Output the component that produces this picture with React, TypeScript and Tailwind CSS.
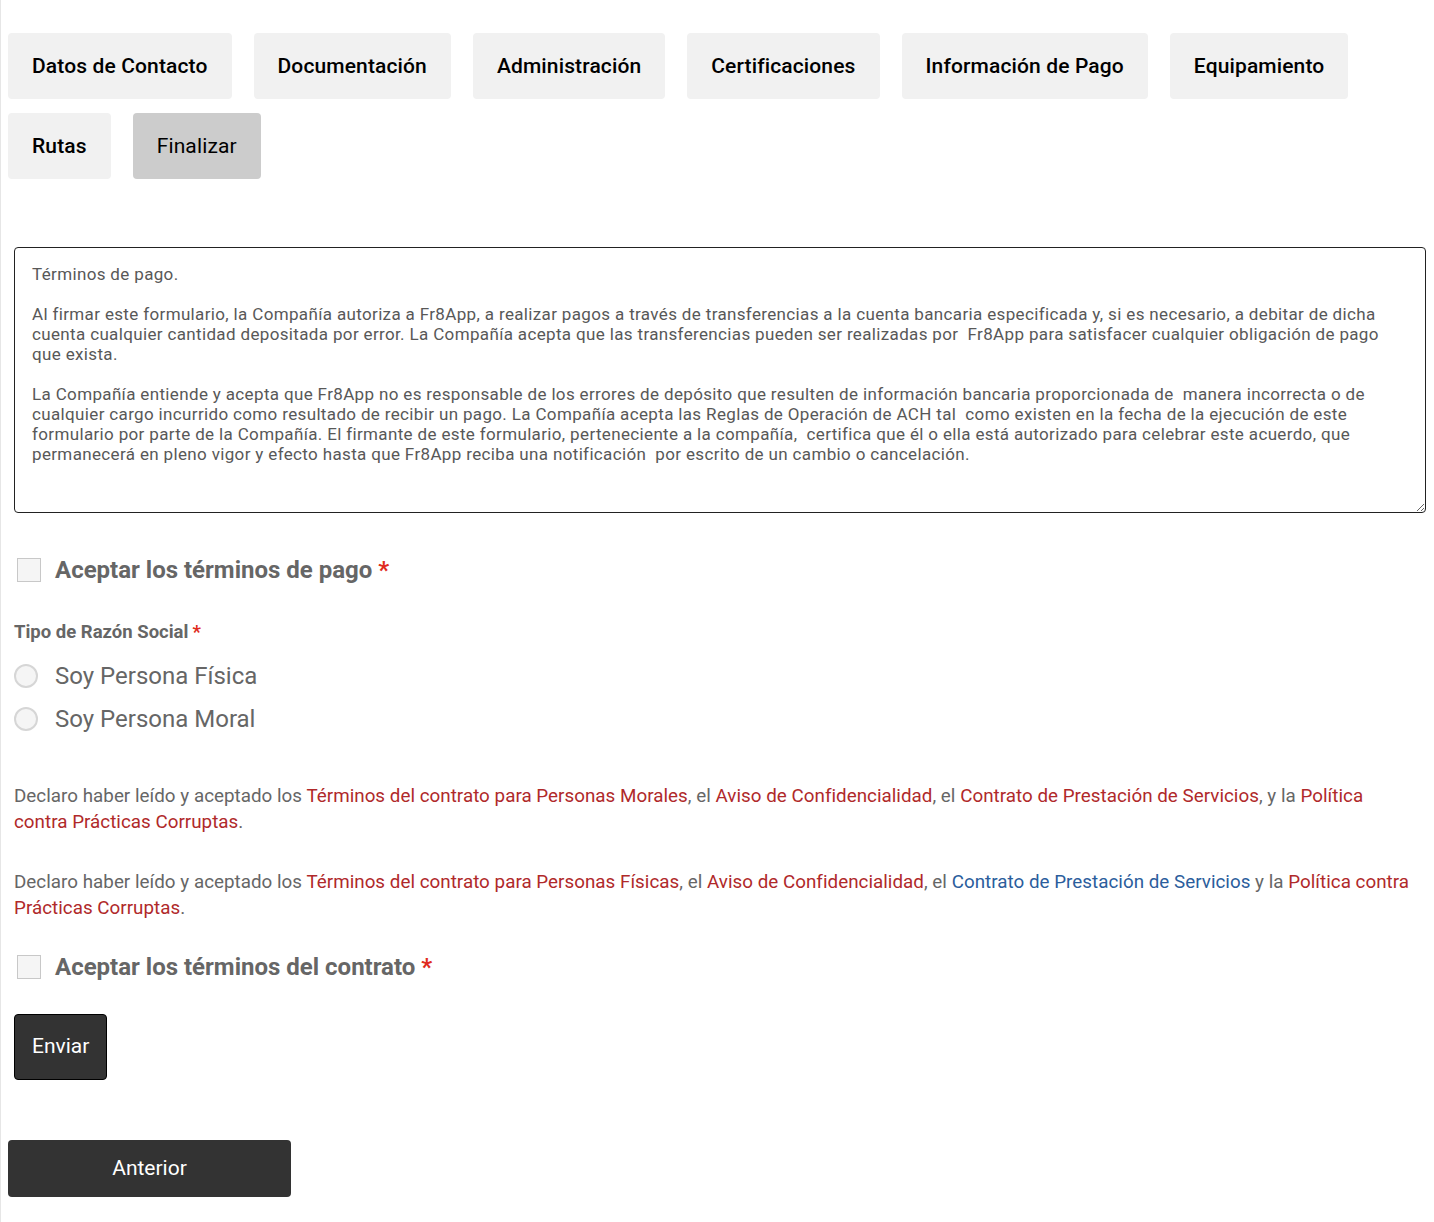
import { useState } from 'react'

const tabs = [
    'Datos de Contacto',
    'Documentación',
    'Administración',
    'Certificaciones',
    'Información de Pago',
    'Equipamiento',
    'Rutas',
    'Finalizar',
]

const termsText = `Términos de pago.

Al firmar este formulario, la Compañía autoriza a Fr8App, a realizar pagos a través de transferencias a la cuenta bancaria especificada y, si es necesario, a debitar de dicha cuenta cualquier cantidad depositada por error. La Compañía acepta que las transferencias pueden ser realizadas por  Fr8App para satisfacer cualquier obligación de pago que exista.

La Compañía entiende y acepta que Fr8App no es responsable de los errores de depósito que resulten de información bancaria proporcionada de  manera incorrecta o de cualquier cargo incurrido como resultado de recibir un pago. La Compañía acepta las Reglas de Operación de ACH tal  como existen en la fecha de la ejecución de este formulario por parte de la Compañía. El firmante de este formulario, perteneciente a la compañía,  certifica que él o ella está autorizado para celebrar este acuerdo, que permanecerá en pleno vigor y efecto hasta que Fr8App reciba una notificación  por escrito de un cambio o cancelación.`

function Req() {
    return <span className="text-[#e02b20] ml-1.5">*</span>
}

function Check({ checked, onToggle, label }: { checked: boolean; onToggle: () => void; label: string }) {
    return (
        <label className="flex items-center gap-[14px] pl-[3px] cursor-pointer">
            <span
                onClick={onToggle}
                className={`w-[24px] h-[24px] border border-[#c8c8c8] shrink-0 ${checked ? 'bg-[#333]' : 'bg-[#f5f5f5]'}`}
            />
            <span className="text-[24px] leading-[30px] font-bold text-[#666]">
                {label}
                <Req />
            </span>
        </label>
    )
}

function Radio({ selected, onSelect, label }: { selected: boolean; onSelect: () => void; label: string }) {
    return (
        <label className="flex items-center gap-[17px] cursor-pointer" onClick={onSelect}>
            <span className="w-[24px] h-[24px] rounded-full border-2 border-[#d6d6d6] bg-[#f5f5f5] flex items-center justify-center shrink-0">
                {selected && <span className="w-[10px] h-[10px] rounded-full bg-[#333]" />}
            </span>
            <span className="text-[24px] leading-[30px] text-[#666]">{label}</span>
        </label>
    )
}

const red = 'text-[#b0292a]'

export default function App() {
    const [active, setActive] = useState('Finalizar')
    const [payTerms, setPayTerms] = useState(false)
    const [contract, setContract] = useState(false)
    const [kind, setKind] = useState<'fisica' | 'moral' | null>(null)

    return (
        <div className="min-h-[1222px] bg-white border-l border-[#e6e6e6] pl-[7px] pr-2 pt-[33px] pb-6 font-['Roboto',sans-serif]">
            <div className="flex flex-wrap gap-x-[22px] gap-y-[14px] max-w-[1410px]">
                {tabs.map((t) => (
                    <button
                        key={t}
                        onClick={() => setActive(t)}
                        className={`px-6 py-5 text-[21px] leading-[26px] tracking-[0.13px] text-black rounded-[4px] ${
                            active === t ? 'bg-[#cccccc] font-normal' : 'bg-[#f1f1f1] font-medium'
                        }`}
                    >
                        {t}
                    </button>
                ))}
            </div>

            <div className="ml-[6px] mt-[68px]">
                <textarea
                    readOnly
                    value={termsText}
                    className="block w-[1412px] h-[266px] border border-[#222] rounded-[4px] px-[17px] pt-[16px] text-[17px] leading-[20px] tracking-[0.35px] text-[#585858] resize-y outline-none"
                />

                <div className="mt-[42px]">
                    <Check checked={payTerms} onToggle={() => setPayTerms(!payTerms)} label="Aceptar los términos de pago" />
                </div>

                <div className="mt-[35px] text-[18.5px] leading-[24px] font-bold text-[#666]">
                    Tipo de Razón Social
                    <span className="text-[#e02b20] ml-1">*</span>
                </div>

                <div className="mt-[17px] flex flex-col gap-[13px]">
                    <Radio selected={kind === 'fisica'} onSelect={() => setKind('fisica')} label="Soy Persona Física" />
                    <Radio selected={kind === 'moral'} onSelect={() => setKind('moral')} label="Soy Persona Moral" />
                </div>

                <p className="mt-[49px] text-[18.8px] leading-[26px] tracking-[0.03px] text-[#666] max-w-[1400px]">
                    Declaro haber leído y aceptado los <a className={red}>Términos del contrato para Personas Morales</a>, el{' '}
                    <a className={red}>Aviso de Confidencialidad</a>, el <a className={red}>Contrato de Prestación de Servicios</a>, y la{' '}
                    <a className={red}>Política contra Prácticas Corruptas</a>.
                </p>

                <p className="mt-[34px] text-[18.8px] leading-[26px] tracking-[0.03px] text-[#666] max-w-[1400px]">
                    Declaro haber leído y aceptado los <a className={red}>Términos del contrato para Personas Físicas</a>, el{' '}
                    <a className={red}>Aviso de Confidencialidad</a>, el{' '}
                    <a className="text-[#2b5d9c]">Contrato de Prestación de Servicios</a> y la{' '}
                    <a className={red}>Política contra Prácticas Corruptas</a>.
                </p>

                <div className="mt-[31px]">
                    <Check checked={contract} onToggle={() => setContract(!contract)} label="Aceptar los términos del contrato" />
                </div>

                <button className="mt-[32px] h-[66px] px-[17px] bg-[#333] border border-black rounded-[4px] text-white text-[21px]">
                    Enviar
                </button>
            </div>

            <button className="block mt-[60px] w-[283px] h-[57px] bg-[#333] rounded-[4px] text-white text-[21px]">
                Anterior
            </button>
        </div>
    )
}
